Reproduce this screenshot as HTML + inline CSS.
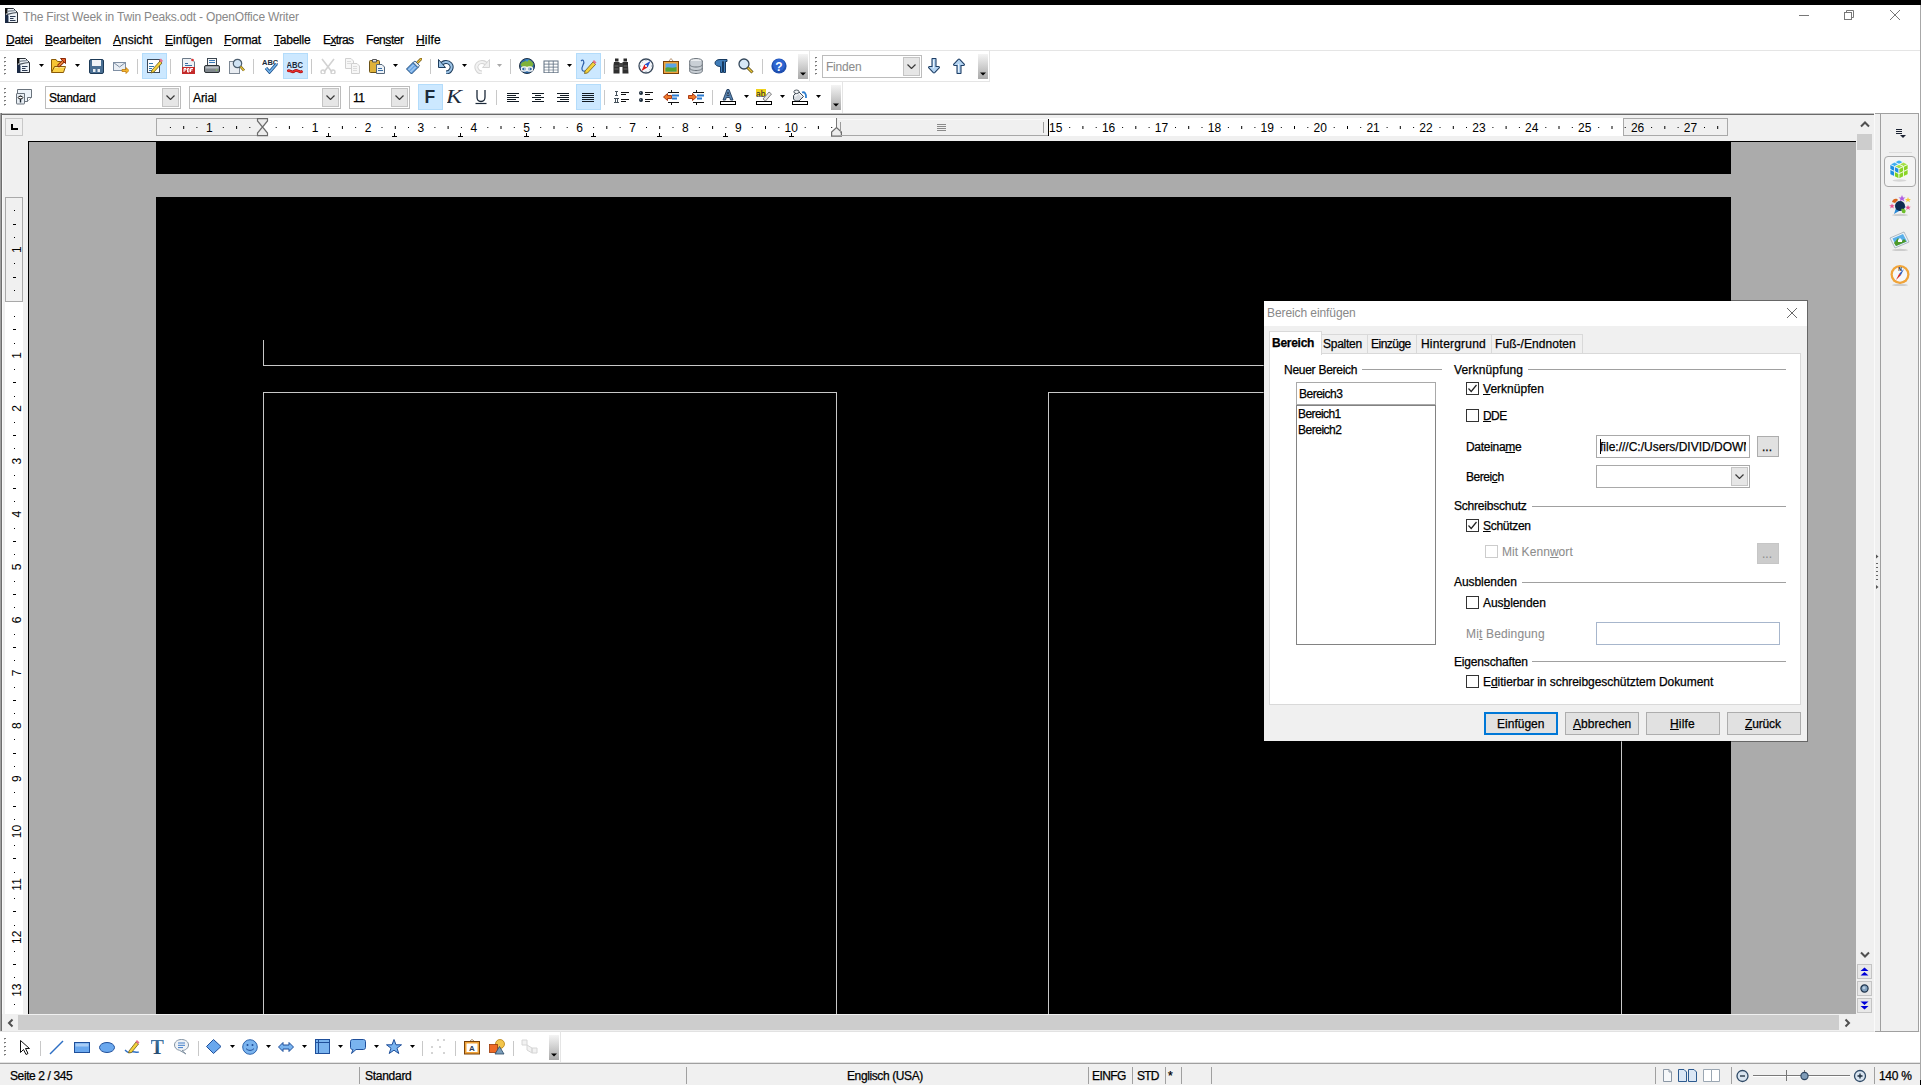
<!DOCTYPE html>
<html><head><meta charset="utf-8"><title>OpenOffice Writer</title>
<style>
*{box-sizing:border-box}
html,body{margin:0;padding:0}
body{width:1921px;height:1085px;position:relative;overflow:hidden;background:#fff;font-family:"Liberation Sans",sans-serif;font-size:12px;color:#000}
.a{position:absolute}
.t{position:absolute;white-space:nowrap;line-height:1;-webkit-text-stroke:0.25px currentColor}
.t u{text-decoration:underline;text-underline-offset:1px;text-decoration-thickness:1px}
</style></head><body>
<div class="a" style="left:0px;top:0px;width:1921px;height:5px;background:#000;"></div>
<svg class="a" style="left:5px;top:8px;" width="13" height="15" viewBox="0 0 13 15"><path d="M0.5 0.5H8.5L12.5 4.5V14.5H0.5Z" fill="#eef3f8" stroke="#2a2f36"/>
<path d="M0 0H2.5V5.5H0Z" fill="#111"/><path d="M0 7H3V15H0Z" fill="#1b2a45"/><path d="M3 7.5H4V14H3Z" fill="#8a98aa"/>
<path d="M2 4C4.5 2 7 3.5 11 2.5" fill="none" stroke="#7a8490" stroke-width="1.1"/><path d="M1.5 6.5C4 6.2 6 5 12 4.5" fill="none" stroke="#4a525c" stroke-width="1.1"/>
<path d="M5 8.5H10.5M5 10.5H8.5M5 12.5H10.5" stroke="#2c3a52" stroke-width="1.1"/></svg>
<div class="t" style="left:23px;top:11px;font-size:12px;color:#888;letter-spacing:-0.167px;-webkit-text-stroke:0.08px currentColor;-webkit-text-stroke:0px;">The First Week in Twin Peaks.odt - OpenOffice Writer</div>
<svg class="a" style="left:1799px;top:14px;" width="10" height="2" viewBox="0 0 10 2"><path d="M0 1.5H10" stroke="#777" stroke-width="1"/></svg>
<svg class="a" style="left:1844px;top:10px;" width="11" height="11" viewBox="0 0 11 11"><path d="M2.5 2V0.5H9.5V7.5H8" fill="none" stroke="#777" stroke-width="1"/><rect x="0.5" y="2.5" width="7" height="7" fill="none" stroke="#777" stroke-width="1"/></svg>
<svg class="a" style="left:1890px;top:10px;" width="10" height="10" viewBox="0 0 10 10"><path d="M0 0L10 10M10 0L0 10" stroke="#777" stroke-width="1"/></svg>
<div class="t" style="left:6px;top:34px;font-size:12px;letter-spacing:-0.274px;"><u>D</u>atei</div>
<div class="t" style="left:45px;top:34px;font-size:12px;letter-spacing:-0.208px;"><u>B</u>earbeiten</div>
<div class="t" style="left:113px;top:34px;font-size:12px;letter-spacing:-0.003px;"><u>A</u>nsicht</div>
<div class="t" style="left:165px;top:34px;font-size:12px;letter-spacing:0.014px;"><u>E</u>infügen</div>
<div class="t" style="left:224px;top:34px;font-size:12px;letter-spacing:-0.184px;"><u>F</u>ormat</div>
<div class="t" style="left:274px;top:34px;font-size:12px;letter-spacing:-0.226px;"><u>T</u>abelle</div>
<div class="t" style="left:323px;top:34px;font-size:12px;letter-spacing:-0.6px;">E<u>x</u>tras</div>
<div class="t" style="left:366px;top:34px;font-size:12px;letter-spacing:-0.448px;">Fen<u>s</u>ter</div>
<div class="t" style="left:416px;top:34px;font-size:12px;letter-spacing:0.167px;"><u>H</u>ilfe</div>
<div class="a" style="left:0px;top:50px;width:1921px;height:1px;background:#e5e5e5;"></div>
<svg class="a" style="left:4px;top:57px;" width="2" height="20" viewBox="0 0 2 20"><rect x="0" y="0" width="2" height="1" fill="#7a7a7a"/><rect x="0" y="1" width="1" height="1" fill="#c8c8c8"/><rect x="0" y="4" width="2" height="1" fill="#7a7a7a"/><rect x="0" y="5" width="1" height="1" fill="#c8c8c8"/><rect x="0" y="8" width="2" height="1" fill="#7a7a7a"/><rect x="0" y="9" width="1" height="1" fill="#c8c8c8"/><rect x="0" y="12" width="2" height="1" fill="#7a7a7a"/><rect x="0" y="13" width="1" height="1" fill="#c8c8c8"/><rect x="0" y="16" width="2" height="1" fill="#7a7a7a"/><rect x="0" y="17" width="1" height="1" fill="#c8c8c8"/></svg>
<svg class="a" style="left:17px;top:58px;" width="13" height="15" viewBox="0 0 13 15"><path d="M0.5 0.5H8.5L12.5 4.5V14.5H0.5Z" fill="#eef3f8" stroke="#2a2f36"/>
<path d="M0 0H2.5V5.5H0Z" fill="#111"/><path d="M0 7H3V15H0Z" fill="#1b2a45"/><path d="M3 7.5H4V14H3Z" fill="#8a98aa"/>
<path d="M2 4C4.5 2 7 3.5 11 2.5" fill="none" stroke="#7a8490" stroke-width="1.1"/><path d="M1.5 6.5C4 6.2 6 5 12 4.5" fill="none" stroke="#4a525c" stroke-width="1.1"/>
<path d="M5 8.5H10.5M5 10.5H8.5M5 12.5H10.5" stroke="#2c3a52" stroke-width="1.1"/></svg>
<svg class="a" style="left:39px;top:64px;" width="5" height="3" viewBox="0 0 5 3"><path d="M0 0H5L2.5 3Z" fill="#000"/></svg>
<svg class="a" style="left:51px;top:58px;" width="15" height="15" viewBox="0 0 15 15"><path d="M0.5 1.5H5L6.5 3.5H9.5V13.5H0.5Z" fill="#f7c533" stroke="#8a5a08"/>
<path d="M3.5 8.5H14.5L12.5 14.5H0.5Z" fill="#fbd248" stroke="#8a5a08"/><path d="M4 9.5H13.5" stroke="#fde68a"/>
<path d="M8 7.5L12 3.5" stroke="#8a2a08" stroke-width="3.2" stroke-linecap="round"/><path d="M8 7.5L12 3.5" stroke="#f08a3a" stroke-width="1.6" stroke-linecap="round"/>
<path d="M9.5 0.5H14.5V5.5Z" fill="#e8602a" stroke="#8a2a08" stroke-linejoin="round"/></svg>
<svg class="a" style="left:75px;top:64px;" width="5" height="3" viewBox="0 0 5 3"><path d="M0 0H5L2.5 3Z" fill="#000"/></svg>
<svg class="a" style="left:89px;top:58px;" width="16" height="16" viewBox="0 0 16 16"><rect x="0.5" y="1.5" width="14" height="14" rx="1.5" fill="#4a6f93" stroke="#1d3a57"/><rect x="3" y="2" width="9" height="6" fill="#f2f5f8"/>
<rect x="4" y="11" width="2.5" height="3" fill="#e6ecf2"/><rect x="8.5" y="11" width="2.5" height="3" fill="#e6ecf2"/></svg>
<svg class="a" style="left:113px;top:58px;" width="16" height="16" viewBox="0 0 16 16"><rect x="0.5" y="4.5" width="12" height="8" fill="#e9eef4" stroke="#7f8fa3"/><path d="M0.5 4.5L6.5 9L12.5 4.5" fill="none" stroke="#7f8fa3"/>
<path d="M9 11.5H13V9.5L16 12.5L13 15.5V13.5H9Z" fill="#f5b631" stroke="#c07a09" stroke-width="0.8"/></svg>
<div class="a" style="left:137px;top:59px;width:1px;height:15px;background:#c8c8c8;"></div>
<div class="a" style="left:142px;top:53px;width:25px;height:26px;background:#cce8ff;border:1px solid #b3dcfb;"></div>
<svg class="a" style="left:146px;top:58px;" width="17" height="16" viewBox="0 0 17 16"><rect x="1.5" y="1.5" width="12" height="13" fill="#fff" stroke="#3c4a5a"/><path d="M3 5.5H7M3 8.5H8M3 10.5H6M3 12.5H6" stroke="#3377aa"/>
<path d="M6 12L14 3L16 5L8 14L5 15Z" fill="#f4d03a" stroke="#6b5a1a" stroke-width="0.8"/><path d="M13 2L15 0.5L17 3L15 4.5Z" fill="#e8718a"/></svg>
<div class="a" style="left:170px;top:59px;width:1px;height:15px;background:#c8c8c8;"></div>
<svg class="a" style="left:181px;top:58px;" width="16" height="16" viewBox="0 0 16 16"><path d="M1.5 0.5H10L13.5 4V15.5H1.5Z" fill="#eef2f6" stroke="#6c7a88"/><path d="M4 5.5H7M4 7.5H11" stroke="#3a6ea5"/>
<rect x="1" y="9" width="13" height="7" fill="#c42a2a"/><path d="M3 10.5V14M3 10.5H5V12H3M6.5 10.5V14H8V10.5H6.5M9.5 10.5V14M9.5 10.5H12M9.5 12H11.5" stroke="#fff" stroke-width="1" fill="none"/>
<circle cx="11.5" cy="2" r="1.3" fill="#d33"/></svg>
<svg class="a" style="left:204px;top:58px;" width="16" height="16" viewBox="0 0 16 16"><rect x="3.5" y="0.5" width="9" height="7" fill="#f4f6f8" stroke="#3c4650"/><path d="M5 2.5H11M5 4.5H11" stroke="#3a78b5"/>
<rect x="0.5" y="7.5" width="15" height="7" rx="1.5" fill="#80878d" stroke="#2c3236"/><rect x="1.5" y="8.5" width="13" height="2" fill="#b8bec3"/><circle cx="12.5" cy="12" r="0.8" fill="#8fd14f"/></svg>
<svg class="a" style="left:229px;top:58px;" width="16" height="16" viewBox="0 0 16 16"><rect x="0.5" y="3.5" width="10" height="12" fill="#e9edf2" stroke="#7d8894"/>
<circle cx="8.5" cy="5.5" r="4.2" fill="#cfe2f3" stroke="#4b5d6e" stroke-width="1.2"/><path d="M11.5 8.5L15 12.5" stroke="#5c4c12" stroke-width="2.6"/><path d="M11.5 8.5L15 12.5" stroke="#e8c53a" stroke-width="1.4"/></svg>
<div class="a" style="left:253px;top:59px;width:1px;height:15px;background:#c8c8c8;"></div>
<svg class="a" style="left:262px;top:58px;" width="16" height="16" viewBox="0 0 16 16"><text x="0" y="7" font-family="Liberation Sans" font-weight="700" font-size="7.5" fill="#1b2a3a">ABC</text>
<path d="M4 10L7.5 14L14.5 6" fill="none" stroke="#1d4f8a" stroke-width="3.2"/><path d="M4 10L7.5 14L14.5 6" fill="none" stroke="#73b3ea" stroke-width="1.6"/></svg>
<div class="a" style="left:283px;top:53px;width:25px;height:26px;background:#cce8ff;border:1px solid #b3dcfb;"></div>
<svg class="a" style="left:287px;top:59px;" width="16" height="16" viewBox="0 0 16 16"><text x="-0.5" y="8.5" font-family="Liberation Sans" font-weight="700" font-size="9" fill="#1b2a3a" textLength="16.5" lengthAdjust="spacingAndGlyphs">ABC</text>
<path d="M0.5 12.5C2.5 9.5 4.5 15 7.5 12C10.5 9.5 12.5 15 15.5 12" fill="none" stroke="#a01010" stroke-width="2.6"/><path d="M0.5 12.5C2.5 9.5 4.5 15 7.5 12C10.5 9.5 12.5 15 15.5 12" fill="none" stroke="#ee3030" stroke-width="1.2"/></svg>
<div class="a" style="left:311px;top:59px;width:1px;height:15px;background:#c8c8c8;"></div>
<svg class="a" style="left:320px;top:58px;" width="16" height="16" viewBox="0 0 16 16"><path d="M2 1L12 14M14 1L4 14" stroke="#d2d2d2" stroke-width="1.6"/><circle cx="3" cy="14" r="2" fill="none" stroke="#d2d2d2" stroke-width="1.4"/><circle cx="13" cy="14" r="2" fill="none" stroke="#d2d2d2" stroke-width="1.4"/></svg>
<svg class="a" style="left:345px;top:58px;" width="16" height="16" viewBox="0 0 16 16"><path d="M0.5 0.5H6L8.5 3V10.5H0.5Z" fill="#f7f7f7" stroke="#d0d0d0"/><path d="M6.5 5.5H12L14.5 8V15.5H6.5Z" fill="#f7f7f7" stroke="#d0d0d0"/><path d="M2 3.5H6M2 5.5H6M8 8.5H12M8 10.5H12M8 12.5H12" stroke="#dcdcdc"/></svg>
<svg class="a" style="left:369px;top:58px;" width="16" height="16" viewBox="0 0 16 16"><rect x="0.5" y="2.5" width="10" height="12" rx="1" fill="#dfb23a" stroke="#6b5217"/><path d="M3.5 1.5H7.5V4H3.5Z" fill="#e6e9ec" stroke="#555"/>
<path d="M7.5 6.5H13L15.5 9V15.5H7.5Z" fill="#eef3f8" stroke="#55677a"/><path d="M9 10.5H13M9 12.5H14" stroke="#3a6ea5"/></svg>
<svg class="a" style="left:393px;top:64px;" width="5" height="3" viewBox="0 0 5 3"><path d="M0 0H5L2.5 3Z" fill="#000"/></svg>
<svg class="a" style="left:406px;top:58px;" width="16" height="16" viewBox="0 0 16 16"><path d="M10.5 5.5L15 1" stroke="#6d5310" stroke-width="2.6" stroke-linecap="round"/><path d="M10.5 5.5L15 1" stroke="#e8c040" stroke-width="1.3" stroke-linecap="round"/>
<path d="M0.5 11L7 4.5L12 9.5L5.5 16Z" fill="#6ea8e6" stroke="#1f4a7a"/><path d="M7 4.5L9 3L13.5 7.5L12 9.5Z" fill="#dfe8f0" stroke="#1f4a7a" stroke-width="0.8"/>
<path d="M2.5 12L7.5 7M4.5 14L9.5 9" stroke="#c6def5" stroke-width="1"/></svg>
<div class="a" style="left:430px;top:59px;width:1px;height:15px;background:#c8c8c8;"></div>
<svg class="a" style="left:438px;top:58px;" width="16" height="16" viewBox="0 0 16 16"><path d="M3.5 6.5C5 3.5 10 3 12.5 6C15 9 13 14.5 8 14.5" fill="none" stroke="#1f3d5c" stroke-width="4"/><path d="M3.5 6.5C5 3.5 10 3 12.5 6C15 9 13 14.5 8 14.5" fill="none" stroke="#9cc3e6" stroke-width="2"/>
<path d="M0.5 1.5V9.5H7.5Z" fill="#9cc3e6" stroke="#1f3d5c"/></svg>
<svg class="a" style="left:462px;top:64px;" width="5" height="3" viewBox="0 0 5 3"><path d="M0 0H5L2.5 3Z" fill="#000"/></svg>
<svg class="a" style="left:474px;top:58px;" width="16" height="16" viewBox="0 0 16 16"><path d="M12.5 6.5C11 3.5 6 3 3.5 6C1 9 3 14.5 8 14.5" fill="none" stroke="#d4d4d4" stroke-width="4"/><path d="M12.5 6.5C11 3.5 6 3 3.5 6C1 9 3 14.5 8 14.5" fill="none" stroke="#f2f2f2" stroke-width="2"/>
<path d="M15.5 1.5V9.5H8.5Z" fill="#f0f0f0" stroke="#d4d4d4"/></svg>
<svg class="a" style="left:497px;top:64px;" width="5" height="3" viewBox="0 0 5 3"><path d="M0 0H5L2.5 3Z" fill="#a8a8a8"/></svg>
<div class="a" style="left:510px;top:59px;width:1px;height:15px;background:#c8c8c8;"></div>
<svg class="a" style="left:519px;top:58px;" width="16" height="16" viewBox="0 0 16 16"><circle cx="8" cy="8" r="7.5" fill="#2e6aa8" stroke="#1e3044"/><path d="M1.5 7C3 3 5 4.5 7 2.5C9 1 12 2 14.5 6L13 9H3Z" fill="#7fb23a"/><path d="M6 1.5L8 4L10 1.5" fill="#3d8fd8"/>
<rect x="2.5" y="9" width="5.5" height="4" rx="2" fill="none" stroke="#f4f4f4" stroke-width="1.4"/><rect x="8" y="9" width="5.5" height="4" rx="2" fill="none" stroke="#f4f4f4" stroke-width="1.4"/><path d="M5 11H11" stroke="#f4f4f4" stroke-width="1.2"/></svg>
<svg class="a" style="left:543px;top:60px;" width="16" height="16" viewBox="0 0 16 16"><rect x="0.5" y="0.5" width="15" height="12.5" fill="#5f6f80"/><path d="M1 1H15V13H1Z" fill="none"/>
<g fill="#fff"><rect x="1.5" y="1.5" width="4" height="2.2"/><rect x="6.3" y="1.5" width="3.5" height="2.2"/><rect x="10.6" y="1.5" width="4" height="2.2"/>
<rect x="1.5" y="4.5" width="4" height="2.2"/><rect x="6.3" y="4.5" width="3.5" height="2.2"/><rect x="10.6" y="4.5" width="4" height="2.2"/>
<rect x="1.5" y="7.5" width="4" height="2.2"/><rect x="6.3" y="7.5" width="3.5" height="2.2"/><rect x="10.6" y="7.5" width="4" height="2.2"/>
<rect x="1.5" y="10.3" width="4" height="2"/><rect x="6.3" y="10.3" width="3.5" height="2"/><rect x="10.6" y="10.3" width="4" height="2"/></g></svg>
<svg class="a" style="left:567px;top:64px;" width="5" height="3" viewBox="0 0 5 3"><path d="M0 0H5L2.5 3Z" fill="#000"/></svg>
<div class="a" style="left:576px;top:53px;width:25px;height:26px;background:#cce8ff;border:1px solid #b3dcfb;"></div>
<svg class="a" style="left:580px;top:58px;" width="17" height="16" viewBox="0 0 17 16"><path d="M1 3C3 1 5 3 3 7C1 11 2 14 5 13" fill="none" stroke="#2e5fa8" stroke-width="1.2"/>
<path d="M5 13L13 4L15.5 6.5L7.5 15L4.5 15.5Z" fill="#f4d03a" stroke="#6b5a1a" stroke-width="0.8"/><path d="M12.5 3.5L14 2L16.5 4.5L15 6Z" fill="#e8718a"/></svg>
<div class="a" style="left:604px;top:59px;width:1px;height:15px;background:#c8c8c8;"></div>
<svg class="a" style="left:613px;top:58px;" width="16" height="16" viewBox="0 0 16 16"><rect x="2" y="0.5" width="3.5" height="3" fill="#2a2a2a"/><rect x="10.5" y="0.5" width="3.5" height="3" fill="#2a2a2a"/>
<path d="M1 4H6.5V15.5H0.5V7Z" fill="#2f2f2f"/><path d="M9.5 4H15V7L15.5 15.5H9.5Z" fill="#2f2f2f"/><rect x="6" y="5" width="4" height="4" fill="#444"/>
<path d="M1.5 8H5.5M1.5 11H5.5M10.5 8H14.5M10.5 11H14.5" stroke="#777" stroke-width="0.8"/></svg>
<svg class="a" style="left:638px;top:58px;" width="16" height="16" viewBox="0 0 16 16"><circle cx="8" cy="8" r="7" fill="#f4f6f9" stroke="#3b4a5c" stroke-width="1.3"/><path d="M8 1.5V3M8 13V14.5M1.5 8H3M13 8H14.5M3.5 3.5L4.5 4.5M12.5 12.5L11.5 11.5M12.5 3.5L11.5 4.5M3.5 12.5L4.5 11.5" stroke="#8a96a4" stroke-width="0.8"/>
<path d="M12.5 3L9.6 9.4L6.6 6.4Z" fill="#2450c8"/><path d="M3.5 13L6.4 6.6L9.4 9.6Z" fill="#e01818"/><circle cx="8" cy="8" r="1" fill="#fff"/></svg>
<svg class="a" style="left:663px;top:58px;" width="16" height="16" viewBox="0 0 16 16"><path d="M6 3L8 0.5L10 3" fill="none" stroke="#a67c52" stroke-width="0.8"/><rect x="0.5" y="3.5" width="15" height="12" fill="#f0a43a" stroke="#7a4208"/>
<rect x="2.5" y="5.5" width="11" height="8" fill="#5aa5e6"/><path d="M2.5 10C5 8 8 11 13.5 9V13.5H2.5Z" fill="#53a331"/></svg>
<svg class="a" style="left:689px;top:58px;" width="14" height="16" viewBox="0 0 14 16"><ellipse cx="7" cy="3" rx="6.3" ry="2.5" fill="#e9ecef" stroke="#6e767e"/><path d="M0.7 3V13C0.7 14.5 3.5 15.5 7 15.5C10.5 15.5 13.3 14.5 13.3 13V3" fill="#c9cfd5" stroke="#6e767e"/>
<path d="M0.7 6.5C0.7 8 3.5 9 7 9C10.5 9 13.3 8 13.3 6.5M0.7 10C0.7 11.5 3.5 12.5 7 12.5C10.5 12.5 13.3 11.5 13.3 10" fill="none" stroke="#6e767e"/></svg>
<svg class="a" style="left:714px;top:59px;" width="14" height="15" viewBox="0 0 14 15"><path d="M6 0.5H13V2.5H11.5V13.5H9.5V2.5H8.5V13.5H6.5V7.5C3 7.5 1 6 1 4C1 2 3 0.5 6 0.5Z" fill="#3f7cb8" stroke="#173a60"/></svg>
<svg class="a" style="left:738px;top:58px;" width="16" height="16" viewBox="0 0 16 16"><circle cx="6" cy="6" r="5" fill="#d6e8f7" stroke="#33475a" stroke-width="1.3"/><path d="M9.5 9.5L14.5 14.5" stroke="#5c4c12" stroke-width="3"/><path d="M9.8 9.8L14.2 14.2" stroke="#e8c53a" stroke-width="1.5"/></svg>
<div class="a" style="left:762px;top:59px;width:1px;height:15px;background:#c8c8c8;"></div>
<svg class="a" style="left:771px;top:58px;" width="16" height="16" viewBox="0 0 16 16"><circle cx="8" cy="8" r="7.6" fill="#1f4fb0"/><circle cx="8" cy="7" r="6" fill="#2d65d1"/><text x="8" y="12.5" text-anchor="middle" font-family="Liberation Sans" font-weight="700" font-size="12" fill="#fff">?</text></svg>
<div class="a" style="left:798px;top:54px;width:10px;height:25px;background:linear-gradient(#f4f4f4,#a9a9a9);"></div>
<svg class="a" style="left:800px;top:72px;" width="6" height="4" viewBox="0 0 6 4"><path d="M0 0.5H6L3 3.5Z" fill="#000"/></svg>
<div class="a" style="left:809px;top:51px;width:1px;height:30px;background:#e5e5e5;"></div>
<svg class="a" style="left:815px;top:57px;" width="2" height="20" viewBox="0 0 2 20"><rect x="0" y="0" width="2" height="1" fill="#7a7a7a"/><rect x="0" y="1" width="1" height="1" fill="#c8c8c8"/><rect x="0" y="4" width="2" height="1" fill="#7a7a7a"/><rect x="0" y="5" width="1" height="1" fill="#c8c8c8"/><rect x="0" y="8" width="2" height="1" fill="#7a7a7a"/><rect x="0" y="9" width="1" height="1" fill="#c8c8c8"/><rect x="0" y="12" width="2" height="1" fill="#7a7a7a"/><rect x="0" y="13" width="1" height="1" fill="#c8c8c8"/><rect x="0" y="16" width="2" height="1" fill="#7a7a7a"/><rect x="0" y="17" width="1" height="1" fill="#c8c8c8"/></svg>
<div class="a" style="left:822px;top:55px;width:100px;height:23px;background:#fff;border:1px solid #bcbcbc;"></div>
<div class="a" style="left:903px;top:57px;width:17px;height:19px;background:#e6e6e6;border:1px solid #c4c4c4;"></div>
<svg class="a" style="left:907px;top:64px;" width="9" height="5" viewBox="0 0 9 5"><path d="M0.5 0.5L4.5 4.5L8.5 0.5" fill="none" stroke="#3a3a3a" stroke-width="1.2"/></svg>
<div class="t" style="left:826px;top:61px;font-size:12px;color:#8d8d8d;letter-spacing:-0.224px;-webkit-text-stroke:0.08px currentColor;">Finden</div>
<svg class="a" style="left:928px;top:58px;" width="12" height="16" viewBox="0 0 12 16"><path d="M4 1C4 0.7 4.3 0.5 4.5 0.5H7.5C7.8 0.5 8 0.7 8 1V8.5H10.5C11.3 8.5 11.7 9.3 11.2 9.9L6.7 14.7C6.3 15.1 5.7 15.1 5.3 14.7L0.8 9.9C0.3 9.3 0.7 8.5 1.5 8.5H4Z" fill="#b4d4f2" stroke="#1f3f66" stroke-width="1.1"/><path d="M5.5 2V10" stroke="#e8f2fb"/></svg>
<svg class="a" style="left:953px;top:58px;" width="12" height="16" viewBox="0 0 12 16"><path d="M4 15C4 15.3 4.3 15.5 4.5 15.5H7.5C7.8 15.5 8 15.3 8 15V7.5H10.5C11.3 7.5 11.7 6.7 11.2 6.1L6.7 1.3C6.3 0.9 5.7 0.9 5.3 1.3L0.8 6.1C0.3 6.7 0.7 7.5 1.5 7.5H4Z" fill="#b4d4f2" stroke="#1f3f66" stroke-width="1.1"/><path d="M5.5 6V14" stroke="#e8f2fb"/></svg>
<div class="a" style="left:978px;top:54px;width:10px;height:25px;background:linear-gradient(#f4f4f4,#a9a9a9);"></div>
<svg class="a" style="left:980px;top:72px;" width="6" height="4" viewBox="0 0 6 4"><path d="M0 0.5H6L3 3.5Z" fill="#000"/></svg>
<div class="a" style="left:989px;top:51px;width:1px;height:30px;background:#e5e5e5;"></div>
<div class="a" style="left:0px;top:81px;width:990px;height:1px;background:#e5e5e5;"></div>
<svg class="a" style="left:4px;top:88px;" width="2" height="20" viewBox="0 0 2 20"><rect x="0" y="0" width="2" height="1" fill="#7a7a7a"/><rect x="0" y="1" width="1" height="1" fill="#c8c8c8"/><rect x="0" y="4" width="2" height="1" fill="#7a7a7a"/><rect x="0" y="5" width="1" height="1" fill="#c8c8c8"/><rect x="0" y="8" width="2" height="1" fill="#7a7a7a"/><rect x="0" y="9" width="1" height="1" fill="#c8c8c8"/><rect x="0" y="12" width="2" height="1" fill="#7a7a7a"/><rect x="0" y="13" width="1" height="1" fill="#c8c8c8"/><rect x="0" y="16" width="2" height="1" fill="#7a7a7a"/><rect x="0" y="17" width="1" height="1" fill="#c8c8c8"/></svg>
<svg class="a" style="left:16px;top:89px;" width="17" height="16" viewBox="0 0 17 16"><path d="M1.5 0.5H15.5V8.5L11.5 12.5H8.5V4.5H1.5Z" fill="#eef4fa" stroke="#6a737c"/><path d="M15.5 8.5H11.5V12.5" fill="#fff" stroke="#6a737c"/>
<rect x="0.5" y="4.5" width="8" height="10.5" rx="0.5" fill="#e8eef4" stroke="#6a737c"/><path d="M4.5 6.5V13.5" stroke="#1a2530" stroke-width="1.4"/><ellipse cx="4.5" cy="8.6" rx="2.4" ry="1.3" fill="#fff" stroke="#222" stroke-width="1"/></svg>
<div class="a" style="left:45px;top:86px;width:136px;height:23px;background:#fff;border:1px solid #bcbcbc;"></div>
<div class="a" style="left:162px;top:88px;width:17px;height:19px;background:#e6e6e6;border:1px solid #c4c4c4;"></div>
<svg class="a" style="left:166px;top:95px;" width="9" height="5" viewBox="0 0 9 5"><path d="M0.5 0.5L4.5 4.5L8.5 0.5" fill="none" stroke="#3a3a3a" stroke-width="1.2"/></svg>
<div class="t" style="left:49px;top:92px;font-size:12px;letter-spacing:-0.276px;">Standard</div>
<div class="a" style="left:189px;top:86px;width:152px;height:23px;background:#fff;border:1px solid #bcbcbc;"></div>
<div class="a" style="left:322px;top:88px;width:17px;height:19px;background:#e6e6e6;border:1px solid #c4c4c4;"></div>
<svg class="a" style="left:326px;top:95px;" width="9" height="5" viewBox="0 0 9 5"><path d="M0.5 0.5L4.5 4.5L8.5 0.5" fill="none" stroke="#3a3a3a" stroke-width="1.2"/></svg>
<div class="t" style="left:193px;top:92px;font-size:12px;letter-spacing:-0.085px;">Arial</div>
<div class="a" style="left:349px;top:86px;width:61px;height:23px;background:#fff;border:1px solid #bcbcbc;"></div>
<div class="a" style="left:391px;top:88px;width:17px;height:19px;background:#e6e6e6;border:1px solid #c4c4c4;"></div>
<svg class="a" style="left:395px;top:95px;" width="9" height="5" viewBox="0 0 9 5"><path d="M0.5 0.5L4.5 4.5L8.5 0.5" fill="none" stroke="#3a3a3a" stroke-width="1.2"/></svg>
<div class="t" style="left:353px;top:92px;font-size:12px;letter-spacing:-0.6px;">11</div>
<div class="a" style="left:418px;top:84px;width:25px;height:26px;background:#cce8ff;border:1px solid #b3dcfb;"></div>
<svg class="a" style="left:425px;top:89px;" width="12" height="16" viewBox="0 0 12 16"><text x="-0.5" y="14" font-family="Liberation Sans" font-weight="700" font-size="17.5" fill="#1c2a3a">F</text></svg>
<svg class="a" style="left:447px;top:89px;" width="17" height="16" viewBox="0 0 17 16"><text x="-1" y="14" font-family="Liberation Serif" font-style="italic" font-weight="400" font-size="19.5" fill="#1c2a3a" textLength="16" lengthAdjust="spacingAndGlyphs">K</text></svg>
<svg class="a" style="left:475px;top:89px;" width="12" height="16" viewBox="0 0 12 16"><path d="M2 1V8C2 11.5 3.5 12.5 6 12.5C8.5 12.5 10 11.5 10 8V1" fill="none" stroke="#1c2a3a" stroke-width="1.3"/><path d="M0.5 14.5H11.5" stroke="#1c2a3a" stroke-width="1.2"/></svg>
<div class="a" style="left:496px;top:90px;width:1px;height:15px;background:#c8c8c8;"></div>
<svg class="a" style="left:507px;top:93px;" width="12" height="9" viewBox="0 0 12 9"><rect x="0" y="0" width="12" height="1" fill="#111a22"/><rect x="0" y="2" width="9" height="1" fill="#111a22"/><rect x="0" y="4" width="12" height="1" fill="#111a22"/><rect x="0" y="6" width="9" height="1" fill="#111a22"/><rect x="0" y="8" width="12" height="1" fill="#111a22"/></svg>
<svg class="a" style="left:532px;top:93px;" width="12" height="9" viewBox="0 0 12 9"><rect x="0" y="0" width="12" height="1" fill="#111a22"/><rect x="3" y="2" width="6" height="1" fill="#111a22"/><rect x="0" y="4" width="12" height="1" fill="#111a22"/><rect x="3" y="6" width="6" height="1" fill="#111a22"/><rect x="0" y="8" width="12" height="1" fill="#111a22"/></svg>
<svg class="a" style="left:557px;top:93px;" width="12" height="9" viewBox="0 0 12 9"><rect x="0" y="0" width="12" height="1" fill="#111a22"/><rect x="3" y="2" width="9" height="1" fill="#111a22"/><rect x="0" y="4" width="12" height="1" fill="#111a22"/><rect x="3" y="6" width="9" height="1" fill="#111a22"/><rect x="0" y="8" width="12" height="1" fill="#111a22"/></svg>
<div class="a" style="left:576px;top:84px;width:25px;height:26px;background:#cce8ff;border:1px solid #b3dcfb;"></div>
<svg class="a" style="left:582px;top:93px;" width="12" height="9" viewBox="0 0 12 9"><rect x="0" y="0" width="12" height="1" fill="#111a22"/><rect x="0" y="2" width="12" height="1" fill="#111a22"/><rect x="0" y="4" width="12" height="1" fill="#111a22"/><rect x="0" y="6" width="12" height="1" fill="#111a22"/><rect x="0" y="8" width="12" height="1" fill="#111a22"/></svg>
<div class="a" style="left:604px;top:90px;width:1px;height:15px;background:#c8c8c8;"></div>
<svg class="a" style="left:613px;top:89px;" width="17" height="16" viewBox="0 0 17 16"><path d="M2 2.5H5M3.5 2.5V6.5M2 6.5H5M1 9.5H6M2.5 9.5V13.5M4.5 9.5V13.5M1 13.5H6" stroke="#46525c" stroke-width="1" fill="none"/>
<path d="M8 3.5H16M8 5.5H13M8 10.5H16M8 12.5H13" stroke="#111" stroke-width="1.1"/></svg>
<svg class="a" style="left:638px;top:89px;" width="16" height="16" viewBox="0 0 16 16"><circle cx="3" cy="4" r="2" fill="#1d2c3a"/><circle cx="3" cy="11" r="2" fill="#1d2c3a"/><circle cx="2.6" cy="3.6" r="0.6" fill="#8aa0b8"/><circle cx="2.6" cy="10.6" r="0.6" fill="#8aa0b8"/>
<path d="M7 3.5H15M7 5.5H12M7 10.5H15M7 12.5H12" stroke="#111" stroke-width="1.1"/></svg>
<svg class="a" style="left:663px;top:89px;" width="17" height="17" viewBox="0 0 17 17"><path d="M5 3.5H16M5 13.5H16" stroke="#111"/><path d="M8.5 1V4M8.5 13V16" stroke="#111"/>
<path d="M9 6.5H16M9 9.5H14" stroke="#2a7bd0" stroke-width="2"/>
<path d="M0.5 8L4.5 4.5V6.5H8.5V9.5H4.5V11.5Z" fill="#f07a2a" stroke="#a02c08" stroke-width="0.9" stroke-linejoin="round"/></svg>
<svg class="a" style="left:688px;top:89px;" width="17" height="17" viewBox="0 0 17 17"><path d="M5 3.5H16M5 13.5H16" stroke="#111"/><path d="M8.5 1V4M8.5 13V16" stroke="#111"/>
<path d="M9 6.5H16M9 9.5H14" stroke="#2a7bd0" stroke-width="2"/>
<path d="M8.5 8L4.5 4.5V6.5H0.5V9.5H4.5V11.5Z" fill="#f07a2a" stroke="#a02c08" stroke-width="0.9" stroke-linejoin="round"/></svg>
<div class="a" style="left:712px;top:90px;width:1px;height:15px;background:#c8c8c8;"></div>
<svg class="a" style="left:720px;top:89px;" width="16" height="16" viewBox="0 0 16 16"><path d="M3 11L7 0.5H9L13 11H10.5L9.7 8.5H6.3L5.5 11Z M6.9 6.5H9.1L8 3Z" fill="#5a86b3" stroke="#1f3a5a" stroke-width="0.9" fill-rule="evenodd"/><rect x="0.5" y="12.5" width="15" height="3" fill="#fff" stroke="#000"/></svg>
<svg class="a" style="left:744px;top:95px;" width="5" height="3" viewBox="0 0 5 3"><path d="M0 0H5L2.5 3Z" fill="#000"/></svg>
<svg class="a" style="left:756px;top:89px;" width="16" height="16" viewBox="0 0 16 16"><rect x="0" y="0" width="10" height="7" fill="#f0d21a"/><text x="0" y="8" font-family="Liberation Sans" font-size="8.5" fill="#1b2530">ab</text>
<path d="M7 10L13 3L15.5 5L9.5 12Z" fill="#e6e6e6" stroke="#666" stroke-width="0.8"/><rect x="0.5" y="12.5" width="15" height="3" fill="#fff" stroke="#000"/></svg>
<svg class="a" style="left:780px;top:95px;" width="5" height="3" viewBox="0 0 5 3"><path d="M0 0H5L2.5 3Z" fill="#000"/></svg>
<svg class="a" style="left:792px;top:89px;" width="16" height="16" viewBox="0 0 16 16"><path d="M1.5 6.5L6 2L11.5 7.5L7 12H3.5L1.5 10Z" fill="#d7dbe0" stroke="#3c4650" stroke-linejoin="round"/><path d="M3 7.5L6.5 4L10 7.5" fill="none" stroke="#f6f8fa" stroke-width="1.2"/>
<ellipse cx="4.5" cy="2.8" rx="2.6" ry="1.8" fill="#f0f2f4" stroke="#3c4650" stroke-width="0.9"/><path d="M10 3.5C12.5 2.5 14.5 4.5 14 9" fill="none" stroke="#2f7fcf" stroke-width="1.8"/>
<rect x="0.5" y="12.5" width="15" height="3" fill="#fff" stroke="#000"/></svg>
<svg class="a" style="left:816px;top:95px;" width="5" height="3" viewBox="0 0 5 3"><path d="M0 0H5L2.5 3Z" fill="#000"/></svg>
<div class="a" style="left:831px;top:85px;width:10px;height:25px;background:linear-gradient(#f4f4f4,#a9a9a9);"></div>
<svg class="a" style="left:833px;top:103px;" width="6" height="4" viewBox="0 0 6 4"><path d="M0 0.5H6L3 3.5Z" fill="#000"/></svg>
<div class="a" style="left:842px;top:82px;width:1px;height:31px;background:#e5e5e5;"></div>
<div class="a" style="left:0px;top:113px;width:1874px;height:1px;background:#c4c4c4;"></div>
<div class="a" style="left:0px;top:114px;width:1874px;height:1px;background:#6a6a6a;"></div>
<div class="a" style="left:0px;top:115px;width:1874px;height:26px;background:#f0f0f0;"></div>
<div class="a" style="left:0px;top:113px;width:1px;height:918px;background:#a0a0a0;"></div>
<div class="a" style="left:1px;top:113px;width:1px;height:918px;background:#6e6e6e;"></div>
<div class="a" style="left:5px;top:118px;width:18px;height:18px;background:#f0f0f0;border:1px solid #c8c8c8;"></div>
<svg class="a" style="left:11px;top:124px;" width="7" height="6" viewBox="0 0 7 6"><path d="M0 0H2V4H7V6H0Z" fill="#000"/></svg>
<div class="a" style="left:156px;top:118px;width:1572px;height:18px;background:#fff;"></div>
<div class="a" style="left:156px;top:118px;width:107px;height:18px;background:#f0f0f0;border:1px solid #a9a9a9;border-right:none;"></div>
<div class="a" style="left:836px;top:118px;width:212px;height:18px;background:#f0f0f0;"></div>
<div class="a" style="left:1623px;top:118px;width:105px;height:18px;background:#f0f0f0;border:1px solid #a9a9a9;"></div>
<svg class="a" style="left:156px;top:118px;" width="1572" height="20" viewBox="0 0 1572 20"><rect x="13.9" y="9" width="1" height="1" fill="#000"/><rect x="27.2" y="8" width="1" height="3" fill="#000"/><rect x="40.4" y="9" width="1" height="1" fill="#000"/><text x="53.3" y="14" text-anchor="middle" font-family="Liberation Sans" font-size="12" fill="#000">1</text><rect x="66.8" y="9" width="1" height="1" fill="#000"/><rect x="80.1" y="8" width="1" height="3" fill="#000"/><rect x="93.3" y="9" width="1" height="1" fill="#000"/><rect x="119.7" y="9" width="1" height="1" fill="#000"/><rect x="132.9" y="8" width="1" height="3" fill="#000"/><rect x="146.2" y="9" width="1" height="1" fill="#000"/><text x="159.1" y="14" text-anchor="middle" font-family="Liberation Sans" font-size="12" fill="#000">1</text><rect x="172.6" y="9" width="1" height="1" fill="#000"/><rect x="185.9" y="8" width="1" height="3" fill="#000"/><rect x="199.1" y="9" width="1" height="1" fill="#000"/><text x="212.0" y="14" text-anchor="middle" font-family="Liberation Sans" font-size="12" fill="#000">2</text><rect x="225.5" y="9" width="1" height="1" fill="#000"/><rect x="238.8" y="8" width="1" height="3" fill="#000"/><rect x="252.0" y="9" width="1" height="1" fill="#000"/><text x="264.9" y="14" text-anchor="middle" font-family="Liberation Sans" font-size="12" fill="#000">3</text><rect x="278.4" y="9" width="1" height="1" fill="#000"/><rect x="291.6" y="8" width="1" height="3" fill="#000"/><rect x="304.9" y="9" width="1" height="1" fill="#000"/><text x="317.8" y="14" text-anchor="middle" font-family="Liberation Sans" font-size="12" fill="#000">4</text><rect x="331.3" y="9" width="1" height="1" fill="#000"/><rect x="344.5" y="8" width="1" height="3" fill="#000"/><rect x="357.8" y="9" width="1" height="1" fill="#000"/><text x="370.7" y="14" text-anchor="middle" font-family="Liberation Sans" font-size="12" fill="#000">5</text><rect x="384.2" y="9" width="1" height="1" fill="#000"/><rect x="397.5" y="8" width="1" height="3" fill="#000"/><rect x="410.7" y="9" width="1" height="1" fill="#000"/><text x="423.6" y="14" text-anchor="middle" font-family="Liberation Sans" font-size="12" fill="#000">6</text><rect x="437.1" y="9" width="1" height="1" fill="#000"/><rect x="450.3" y="8" width="1" height="3" fill="#000"/><rect x="463.6" y="9" width="1" height="1" fill="#000"/><text x="476.5" y="14" text-anchor="middle" font-family="Liberation Sans" font-size="12" fill="#000">7</text><rect x="490.0" y="9" width="1" height="1" fill="#000"/><rect x="503.2" y="8" width="1" height="3" fill="#000"/><rect x="516.5" y="9" width="1" height="1" fill="#000"/><text x="529.4" y="14" text-anchor="middle" font-family="Liberation Sans" font-size="12" fill="#000">8</text><rect x="542.9" y="9" width="1" height="1" fill="#000"/><rect x="556.1" y="8" width="1" height="3" fill="#000"/><rect x="569.4" y="9" width="1" height="1" fill="#000"/><text x="582.3" y="14" text-anchor="middle" font-family="Liberation Sans" font-size="12" fill="#000">9</text><rect x="595.8" y="9" width="1" height="1" fill="#000"/><rect x="609.0" y="8" width="1" height="3" fill="#000"/><rect x="622.3" y="9" width="1" height="1" fill="#000"/><text x="635.2" y="14" text-anchor="middle" font-family="Liberation Sans" font-size="12" fill="#000">10</text><rect x="648.7" y="9" width="1" height="1" fill="#000"/><rect x="661.9" y="8" width="1" height="3" fill="#000"/><rect x="675.2" y="9" width="1" height="1" fill="#000"/><text x="899.7" y="14" text-anchor="middle" font-family="Liberation Sans" font-size="12" fill="#000">15</text><rect x="913.2" y="9" width="1" height="1" fill="#000"/><rect x="926.4" y="8" width="1" height="3" fill="#000"/><rect x="939.7" y="9" width="1" height="1" fill="#000"/><text x="952.6" y="14" text-anchor="middle" font-family="Liberation Sans" font-size="12" fill="#000">16</text><rect x="966.1" y="9" width="1" height="1" fill="#000"/><rect x="979.3" y="8" width="1" height="3" fill="#000"/><rect x="992.6" y="9" width="1" height="1" fill="#000"/><text x="1005.5" y="14" text-anchor="middle" font-family="Liberation Sans" font-size="12" fill="#000">17</text><rect x="1019.0" y="9" width="1" height="1" fill="#000"/><rect x="1032.2" y="8" width="1" height="3" fill="#000"/><rect x="1045.5" y="9" width="1" height="1" fill="#000"/><text x="1058.4" y="14" text-anchor="middle" font-family="Liberation Sans" font-size="12" fill="#000">18</text><rect x="1071.9" y="9" width="1" height="1" fill="#000"/><rect x="1085.2" y="8" width="1" height="3" fill="#000"/><rect x="1098.4" y="9" width="1" height="1" fill="#000"/><text x="1111.3" y="14" text-anchor="middle" font-family="Liberation Sans" font-size="12" fill="#000">19</text><rect x="1124.8" y="9" width="1" height="1" fill="#000"/><rect x="1138.0" y="8" width="1" height="3" fill="#000"/><rect x="1151.3" y="9" width="1" height="1" fill="#000"/><text x="1164.2" y="14" text-anchor="middle" font-family="Liberation Sans" font-size="12" fill="#000">20</text><rect x="1177.7" y="9" width="1" height="1" fill="#000"/><rect x="1191.0" y="8" width="1" height="3" fill="#000"/><rect x="1204.2" y="9" width="1" height="1" fill="#000"/><text x="1217.1" y="14" text-anchor="middle" font-family="Liberation Sans" font-size="12" fill="#000">21</text><rect x="1230.6" y="9" width="1" height="1" fill="#000"/><rect x="1243.8" y="8" width="1" height="3" fill="#000"/><rect x="1257.1" y="9" width="1" height="1" fill="#000"/><text x="1270.0" y="14" text-anchor="middle" font-family="Liberation Sans" font-size="12" fill="#000">22</text><rect x="1283.5" y="9" width="1" height="1" fill="#000"/><rect x="1296.8" y="8" width="1" height="3" fill="#000"/><rect x="1310.0" y="9" width="1" height="1" fill="#000"/><text x="1322.9" y="14" text-anchor="middle" font-family="Liberation Sans" font-size="12" fill="#000">23</text><rect x="1336.4" y="9" width="1" height="1" fill="#000"/><rect x="1349.6" y="8" width="1" height="3" fill="#000"/><rect x="1362.9" y="9" width="1" height="1" fill="#000"/><text x="1375.8" y="14" text-anchor="middle" font-family="Liberation Sans" font-size="12" fill="#000">24</text><rect x="1389.3" y="9" width="1" height="1" fill="#000"/><rect x="1402.5" y="8" width="1" height="3" fill="#000"/><rect x="1415.8" y="9" width="1" height="1" fill="#000"/><text x="1428.7" y="14" text-anchor="middle" font-family="Liberation Sans" font-size="12" fill="#000">25</text><rect x="1442.2" y="9" width="1" height="1" fill="#000"/><rect x="1455.5" y="8" width="1" height="3" fill="#000"/><rect x="1468.7" y="9" width="1" height="1" fill="#000"/><text x="1481.6" y="14" text-anchor="middle" font-family="Liberation Sans" font-size="12" fill="#000">26</text><rect x="1495.1" y="9" width="1" height="1" fill="#000"/><rect x="1508.3" y="8" width="1" height="3" fill="#000"/><rect x="1521.6" y="9" width="1" height="1" fill="#000"/><text x="1534.5" y="14" text-anchor="middle" font-family="Liberation Sans" font-size="12" fill="#000">27</text><rect x="1548.0" y="9" width="1" height="1" fill="#000"/><rect x="1561.2" y="8" width="1" height="3" fill="#000"/><path d="M170 18.5H175M172.5 15V18" stroke="#000" stroke-width="1"/><path d="M236 18.5H241M238.5 15V18" stroke="#000" stroke-width="1"/><path d="M302 18.5H307M304.5 15V18" stroke="#000" stroke-width="1"/><path d="M368 18.5H373M370.5 15V18" stroke="#000" stroke-width="1"/><path d="M435 18.5H440M437.5 15V18" stroke="#000" stroke-width="1"/><path d="M501 18.5H506M503.5 15V18" stroke="#000" stroke-width="1"/><path d="M567 18.5H572M569.5 15V18" stroke="#000" stroke-width="1"/><path d="M633 18.5H638M635.5 15V18" stroke="#000" stroke-width="1"/><path d="M680.5 0V10" stroke="#7a7a7a"/><path d="M675.6 18.2H685.4V14L680.5 9.5L675.6 14Z" fill="#ededed" stroke="#6c6c6c" stroke-width="1.2"/><path d="M101.5 0.7H111.5V3L106.5 9L111.5 15V17.6H101.5V15L106.5 9L101.5 3Z" fill="#ececec" stroke="#6c6c6c" stroke-width="1.2"/><path d="M781 6.5H790M781 8.5H790M781 10.5H790M781 12.5H790" stroke="#8a8a8a" stroke-width="1"/><rect x="892" y="1" width="1" height="17" fill="#000"/><rect x="887" y="4" width="1" height="11" fill="#9a9a9a"/><rect x="684" y="4" width="1" height="11" fill="#9a9a9a"/><rect x="682" y="17" width="210" height="1" fill="#a8a8a8"/><rect x="682" y="1" width="210" height="1" fill="#fafafa"/></svg>
<div class="a" style="left:2px;top:141px;width:26px;height:873px;background:#f0f0f0;"></div>
<div class="a" style="left:2px;top:115px;width:1px;height:916px;background:#fafafa;"></div>
<div class="a" style="left:5px;top:197px;width:18px;height:817px;background:#fff;"></div>
<div class="a" style="left:5px;top:197px;width:18px;height:105px;background:#f0f0f0;border:1px solid #a9a9a9;"></div>
<svg class="a" style="left:5px;top:197px;" width="18" height="817" viewBox="0 0 18 817"><rect x="9" y="13" width="1" height="1" fill="#000"/><rect x="8" y="27" width="3" height="1" fill="#000"/><rect x="9" y="40" width="1" height="1" fill="#000"/><text transform="translate(15.5,52.6) rotate(-90)" text-anchor="middle" y="0" font-family="Liberation Sans" font-size="12">1</text><rect x="9" y="66" width="1" height="1" fill="#000"/><rect x="8" y="80" width="3" height="1" fill="#000"/><rect x="9" y="93" width="1" height="1" fill="#000"/><rect x="9" y="119" width="1" height="1" fill="#000"/><rect x="8" y="132" width="3" height="1" fill="#000"/><rect x="9" y="146" width="1" height="1" fill="#000"/><text transform="translate(15.5,158.4) rotate(-90)" text-anchor="middle" y="0" font-family="Liberation Sans" font-size="12">1</text><rect x="9" y="172" width="1" height="1" fill="#000"/><rect x="8" y="185" width="3" height="1" fill="#000"/><rect x="9" y="199" width="1" height="1" fill="#000"/><text transform="translate(15.5,211.3) rotate(-90)" text-anchor="middle" y="0" font-family="Liberation Sans" font-size="12">2</text><rect x="9" y="225" width="1" height="1" fill="#000"/><rect x="8" y="238" width="3" height="1" fill="#000"/><rect x="9" y="251" width="1" height="1" fill="#000"/><text transform="translate(15.5,264.2) rotate(-90)" text-anchor="middle" y="0" font-family="Liberation Sans" font-size="12">3</text><rect x="9" y="278" width="1" height="1" fill="#000"/><rect x="8" y="291" width="3" height="1" fill="#000"/><rect x="9" y="304" width="1" height="1" fill="#000"/><text transform="translate(15.5,317.1) rotate(-90)" text-anchor="middle" y="0" font-family="Liberation Sans" font-size="12">4</text><rect x="9" y="331" width="1" height="1" fill="#000"/><rect x="8" y="344" width="3" height="1" fill="#000"/><rect x="9" y="357" width="1" height="1" fill="#000"/><text transform="translate(15.5,370.0) rotate(-90)" text-anchor="middle" y="0" font-family="Liberation Sans" font-size="12">5</text><rect x="9" y="384" width="1" height="1" fill="#000"/><rect x="8" y="397" width="3" height="1" fill="#000"/><rect x="9" y="410" width="1" height="1" fill="#000"/><text transform="translate(15.5,422.9) rotate(-90)" text-anchor="middle" y="0" font-family="Liberation Sans" font-size="12">6</text><rect x="9" y="437" width="1" height="1" fill="#000"/><rect x="8" y="450" width="3" height="1" fill="#000"/><rect x="9" y="463" width="1" height="1" fill="#000"/><text transform="translate(15.5,475.8) rotate(-90)" text-anchor="middle" y="0" font-family="Liberation Sans" font-size="12">7</text><rect x="9" y="490" width="1" height="1" fill="#000"/><rect x="8" y="503" width="3" height="1" fill="#000"/><rect x="9" y="516" width="1" height="1" fill="#000"/><text transform="translate(15.5,528.7) rotate(-90)" text-anchor="middle" y="0" font-family="Liberation Sans" font-size="12">8</text><rect x="9" y="542" width="1" height="1" fill="#000"/><rect x="8" y="556" width="3" height="1" fill="#000"/><rect x="9" y="569" width="1" height="1" fill="#000"/><text transform="translate(15.5,581.6) rotate(-90)" text-anchor="middle" y="0" font-family="Liberation Sans" font-size="12">9</text><rect x="9" y="595" width="1" height="1" fill="#000"/><rect x="8" y="609" width="3" height="1" fill="#000"/><rect x="9" y="622" width="1" height="1" fill="#000"/><text transform="translate(15.5,634.5) rotate(-90)" text-anchor="middle" y="0" font-family="Liberation Sans" font-size="12">10</text><rect x="9" y="648" width="1" height="1" fill="#000"/><rect x="8" y="661" width="3" height="1" fill="#000"/><rect x="9" y="675" width="1" height="1" fill="#000"/><text transform="translate(15.5,687.4) rotate(-90)" text-anchor="middle" y="0" font-family="Liberation Sans" font-size="12">11</text><rect x="9" y="701" width="1" height="1" fill="#000"/><rect x="8" y="714" width="3" height="1" fill="#000"/><rect x="9" y="728" width="1" height="1" fill="#000"/><text transform="translate(15.5,740.3) rotate(-90)" text-anchor="middle" y="0" font-family="Liberation Sans" font-size="12">12</text><rect x="9" y="754" width="1" height="1" fill="#000"/><rect x="8" y="767" width="3" height="1" fill="#000"/><rect x="9" y="780" width="1" height="1" fill="#000"/><text transform="translate(15.5,793.2) rotate(-90)" text-anchor="middle" y="0" font-family="Liberation Sans" font-size="12">13</text><rect x="9" y="807" width="1" height="1" fill="#000"/></svg>
<div class="a" style="left:28px;top:141px;width:1828px;height:873px;background:#ababab;"></div>
<div class="a" style="left:28px;top:141px;width:1828px;height:1px;background:#000;"></div>
<div class="a" style="left:28px;top:141px;width:1px;height:873px;background:#000;"></div>
<div class="a" style="left:156px;top:141px;width:1575px;height:33px;background:#000;"></div>
<div class="a" style="left:156px;top:197px;width:1575px;height:817px;background:#000;"></div>
<div class="a" style="left:263px;top:340px;width:1px;height:26px;background:#c8c8c8;"></div>
<div class="a" style="left:263px;top:365px;width:1358px;height:1px;background:#c8c8c8;"></div>
<div class="a" style="left:1621px;top:340px;width:1px;height:26px;background:#c8c8c8;"></div>
<div class="a" style="left:263px;top:392px;width:574px;height:622px;border:1px solid #c8c8c8;border-bottom:none;"></div>
<div class="a" style="left:1048px;top:392px;width:574px;height:622px;border:1px solid #c8c8c8;border-bottom:none;"></div>
<div class="a" style="left:1856px;top:115px;width:18px;height:899px;background:#f0f0f0;"></div>
<svg class="a" style="left:1860px;top:120px;" width="10" height="8" viewBox="0 0 10 8"><path d="M1 6.5L5 2.5L9 6.5" fill="none" stroke="#505050" stroke-width="2"/></svg>
<div class="a" style="left:1857px;top:134px;width:15px;height:16px;background:#cdcdcd;"></div>
<svg class="a" style="left:1860px;top:951px;" width="10" height="8" viewBox="0 0 10 8"><path d="M1 1.5L5 5.5L9 1.5" fill="none" stroke="#505050" stroke-width="2"/></svg>
<div class="a" style="left:1857px;top:964px;width:15px;height:15px;background:#e8e8e8;border:1px solid #c4c4c4;"></div>
<svg class="a" style="left:1860px;top:967px;" width="9" height="9" viewBox="0 0 9 9"><path d="M0.5 4L4.5 0.5L8.5 4Z M0.5 8.5L4.5 5L8.5 8.5Z" fill="#0000d8"/></svg>
<div class="a" style="left:1857px;top:981px;width:15px;height:15px;background:#e8e8e8;border:1px solid #c4c4c4;"></div>
<svg class="a" style="left:1860px;top:984px;" width="9" height="9" viewBox="0 0 9 9"><circle cx="4.5" cy="4.5" r="3.6" fill="#7f9fbd" stroke="#1f344c" stroke-width="1.2"/><circle cx="4" cy="3.8" r="1.5" fill="#b8cde0"/></svg>
<div class="a" style="left:1857px;top:998px;width:15px;height:15px;background:#e8e8e8;border:1px solid #c4c4c4;"></div>
<svg class="a" style="left:1860px;top:1001px;" width="9" height="9" viewBox="0 0 9 9"><path d="M0.5 0.5L4.5 4L8.5 0.5Z M0.5 5L4.5 8.5L8.5 5Z" fill="#0000d8"/></svg>
<div class="a" style="left:2px;top:1014px;width:1872px;height:17px;background:#f0f0f0;"></div>
<div class="a" style="left:0px;top:1031px;width:1875px;height:1px;background:#e2e2e2;"></div>
<div class="a" style="left:18px;top:1015px;width:1821px;height:15px;background:#cdcdcd;"></div>
<svg class="a" style="left:6px;top:1018px;" width="8" height="10" viewBox="0 0 8 10"><path d="M6.5 1.5L3 5L6.5 8.5" fill="none" stroke="#505050" stroke-width="2"/></svg>
<svg class="a" style="left:1844px;top:1018px;" width="8" height="10" viewBox="0 0 8 10"><path d="M1.5 1.5L5 5L1.5 8.5" fill="none" stroke="#505050" stroke-width="2"/></svg>
<div class="a" style="left:1874px;top:113px;width:46px;height:919px;background:#f0f0f0;"></div>
<div class="a" style="left:1874px;top:113px;width:1px;height:918px;background:#fafafa;"></div>
<div class="a" style="left:1875px;top:113px;width:45px;height:1px;background:#a0a0a0;"></div>
<div class="a" style="left:1880px;top:113px;width:1px;height:918px;background:#a0a0a0;"></div>
<div class="a" style="left:1918px;top:113px;width:1px;height:918px;background:#a0a0a0;"></div>
<div class="a" style="left:1875px;top:1031px;width:44px;height:1px;background:#a0a0a0;"></div>
<div class="a" style="left:1919px;top:113px;width:1px;height:918px;background:#fff;"></div>
<svg class="a" style="left:1876px;top:554px;" width="3" height="37" viewBox="0 0 3 37"><path d="M0 0.5L2.5 2.5L0 4.5Z M0 31L2.5 33L0 35Z" fill="#555"/><g fill="#666"><rect x="0" y="9" width="2" height="1"/><rect x="0" y="13" width="2" height="1"/><rect x="0" y="17" width="2" height="1"/><rect x="0" y="21" width="2" height="1"/><rect x="0" y="25" width="2" height="1"/></g></svg>
<svg class="a" style="left:1896px;top:129px;" width="11" height="10" viewBox="0 0 11 10"><path d="M0 0.5H6M0 2.5H6M0 4.5H6" stroke="#1c2333"/><path d="M4 6H10L7 9Z" fill="#1c2333"/></svg>
<div class="a" style="left:1889px;top:152px;width:23px;height:1px;background:#dcdcdc;"></div>
<div class="a" style="left:1884px;top:156px;width:32px;height:31px;background:#f4f4f4;border:1px solid #a8a8a8;border-radius:4px;"></div>
<svg class="a" style="left:1889px;top:159px;" width="21" height="23" viewBox="0 0 21 23"><g stroke="#fff" stroke-width="0.7" stroke-linejoin="round">
<path d="M10 1L14.5 3.2L10 5.4L5.5 3.2Z" fill="#3fb0f0"/><path d="M14.5 3.2L19 5.4L14.5 7.6L10 5.4Z" fill="#a6e04a"/><path d="M5.5 3.2L10 5.4L5.5 7.6L1 5.4Z" fill="#3fb0f0"/><path d="M10 5.4L14.5 7.6L10 9.8L5.5 7.6Z" fill="#a6e04a"/>
<path d="M1 5.4L5.5 7.6V12.6L1 10.4Z" fill="#1e8fe0"/><path d="M5.5 7.6L10 9.8V14.8L5.5 12.6Z" fill="#1e8fe0"/><path d="M1 10.4L5.5 12.6V17.6L1 15.4Z" fill="#1e8fe0"/><path d="M5.5 12.6L10 14.8V19.8L5.5 17.6Z" fill="#7fcf1e"/>
<path d="M10 9.8L14.5 7.6V12.6L10 14.8Z" fill="#8ad426"/><path d="M14.5 7.6L19 5.4V10.4L14.5 12.6Z" fill="#8ad426"/><path d="M10 14.8L14.5 12.6V17.6L10 19.8Z" fill="#8ad426"/><path d="M14.5 12.6L19 10.4V15.4L14.5 17.6Z" fill="#8ad426"/></g>
<ellipse cx="10.5" cy="21.5" rx="7" ry="1.2" fill="#000" opacity="0.12"/></svg>
<svg class="a" style="left:1889px;top:194px;" width="22" height="22" viewBox="0 0 22 22"><path d="M3 8C4 4 8 4 9 6L6 9Z" fill="#d9641c"/><path d="M5 20L9 8L17 13Z" fill="#2a8ad6"/><circle cx="11" cy="12" r="5" fill="#0d2a50"/>
<path d="M12 15C15 14 18 16 16 19C14 20 12 18 13 17Z" fill="#6cbf2a"/><path d="M13 1L14 3.5L16.5 3.5L14.5 5L15.5 7.5L13 6L10.5 7.5L11.5 5L9.5 3.5L12 3.5Z" fill="#b05ee0"/>
<path d="M19 3L19.8 5L22 5L20.3 6.2L21 8.3L19 7L17 8.3L17.7 6.2L16 5L18.2 5Z" fill="#f3c93a"/><path d="M3 9.5L3.8 11.3L5.8 11.3L4.2 12.5L4.8 14.5L3 13.3L1.2 14.5L1.8 12.5L0.2 11.3L2.2 11.3Z" fill="#e8508f"/>
<path d="M19 11L19.8 12.8L21.8 12.8L20.2 14L20.8 16L19 14.8L17.2 16L17.8 14L16.2 12.8L18.2 12.8Z" fill="#e8508f"/>
<ellipse cx="11" cy="21" rx="8" ry="1.2" fill="#000" opacity="0.15"/></svg>
<svg class="a" style="left:1889px;top:229px;" width="22" height="22" viewBox="0 0 22 22"><path d="M1 9L15 3L20 13L6 19Z" fill="#eef3f7" stroke="#9aa9b6" stroke-width="0.8"/><path d="M3.5 9.5L14 5L18 12.5L7 17Z" fill="#5ab0ea"/>
<path d="M5 14L9 9L12 13L15 10L17.5 12.5L7 17Z" fill="#4e9a2a"/><path d="M9 11L11 9L13 11V13H9Z" fill="#fff"/><ellipse cx="11" cy="21" rx="8" ry="1.2" fill="#000" opacity="0.15"/></svg>
<svg class="a" style="left:1889px;top:264px;" width="22" height="22" viewBox="0 0 22 22"><circle cx="11" cy="10.5" r="9.5" fill="#f0a43a"/><circle cx="11" cy="10.5" r="7.2" fill="#f6f8fb"/>
<path d="M15 5L11.8 11.3L10.2 9.7Z" fill="#2d59b8"/><path d="M7 16L10.2 9.7L11.8 11.3Z" fill="#d42020"/><text x="11" y="6.5" text-anchor="middle" font-family="Liberation Sans" font-weight="700" font-size="5" fill="#223">N</text>
<ellipse cx="11" cy="21" rx="8" ry="1.2" fill="#000" opacity="0.15"/></svg>
<div class="a" style="left:1263px;top:300px;width:545px;height:442px;border:1px solid rgba(0,0,0,0.4);"></div>
<div class="a" style="left:1264px;top:301px;width:543px;height:440px;background:#f0f0f0;"></div>
<div class="a" style="left:1264px;top:301px;width:543px;height:25px;background:#fff;"></div>
<div class="t" style="left:1267px;top:307px;font-size:12px;color:#888;letter-spacing:-0.086px;-webkit-text-stroke:0.08px currentColor;-webkit-text-stroke:0px;">Bereich einfügen</div>
<svg class="a" style="left:1787px;top:308px;" width="10" height="10" viewBox="0 0 10 10"><path d="M0 0L10 10M10 0L0 10" stroke="#6a6a6a" stroke-width="1"/></svg>
<div class="a" style="left:1321px;top:334px;width:47px;height:20px;background:#f0f0f0;border:1px solid #d9d9d9;"></div>
<div class="t" style="left:1323px;top:338px;font-size:12px;letter-spacing:-0.271px;">Spalten</div>
<div class="a" style="left:1367px;top:334px;width:50px;height:20px;background:#f0f0f0;border:1px solid #d9d9d9;"></div>
<div class="t" style="left:1371px;top:338px;font-size:12px;letter-spacing:-0.515px;">Einzüge</div>
<div class="a" style="left:1416px;top:334px;width:76px;height:20px;background:#f0f0f0;border:1px solid #d9d9d9;"></div>
<div class="t" style="left:1421px;top:338px;font-size:12px;letter-spacing:0.2px;">Hintergrund</div>
<div class="a" style="left:1491px;top:334px;width:92px;height:20px;background:#f0f0f0;border:1px solid #d9d9d9;"></div>
<div class="t" style="left:1495px;top:338px;font-size:12px;letter-spacing:0.061px;">Fuß-/Endnoten</div>
<div class="a" style="left:1269px;top:353px;width:532px;height:352px;background:#fff;border:1px solid #d9d9d9;"></div>
<div class="a" style="left:1269px;top:331px;width:53px;height:24px;background:#fff;border:1px solid #d9d9d9;border-bottom:none;"></div>
<div class="t" style="left:1272px;top:337px;font-size:12px;font-weight:700;letter-spacing:-0.265px;">Bereich</div>
<div class="t" style="left:1284px;top:364px;font-size:12px;letter-spacing:-0.269px;">Neuer Bereich</div>
<div class="a" style="left:1362px;top:369px;width:80px;height:1px;background:#a0a0a0;"></div>
<div class="a" style="left:1296px;top:382px;width:140px;height:23px;background:#fff;border:1px solid #a9a9a9;"></div>
<div class="t" style="left:1299px;top:388px;font-size:12px;letter-spacing:-0.498px;">Bereich3</div>
<div class="a" style="left:1296px;top:405px;width:140px;height:240px;background:#fff;border:1px solid #828282;"></div>
<div class="t" style="left:1298px;top:408px;font-size:12px;letter-spacing:-0.598px;">Bereich1</div>
<div class="t" style="left:1298px;top:424px;font-size:12px;letter-spacing:-0.484px;">Bereich2</div>
<div class="t" style="left:1454px;top:364px;font-size:12px;letter-spacing:0.159px;">Verknüpfung</div>
<div class="a" style="left:1528px;top:369px;width:258px;height:1px;background:#a0a0a0;"></div>
<div class="a" style="left:1466px;top:382px;width:13px;height:13px;background:#fff;border:1px solid #333333;"></div>
<svg class="a" style="left:1468px;top:384px;" width="9" height="9" viewBox="0 0 9 9"><path d="M0.5 4.5L3.2 7.5L8.5 1" fill="none" stroke="#222" stroke-width="1.2"/></svg>
<div class="t" style="left:1483px;top:383px;font-size:12px;letter-spacing:0.018px;"><u>V</u>erknüpfen</div>
<div class="a" style="left:1466px;top:409px;width:13px;height:13px;background:#fff;border:1px solid #333333;"></div>
<div class="t" style="left:1483px;top:410px;font-size:12px;letter-spacing:-0.6px;"><u>D</u>DE</div>
<div class="t" style="left:1466px;top:441px;font-size:12px;letter-spacing:-0.295px;">Dateina<u>m</u>e</div>
<div class="a" style="left:1596px;top:435px;width:154px;height:23px;background:#fff;border:1px solid #a9a9a9;"></div>
<div class="t" style="left:1600px;top:441px;font-size:12px;width:146px;overflow:hidden;">file:///C:/Users/DIVID/DOWNLOADS</div>
<div class="a" style="left:1600px;top:439px;width:1px;height:15px;background:#000;"></div>
<div class="a" style="left:1757px;top:436px;width:22px;height:21px;background:#e1e1e1;border:1px solid #adadad;"></div>
<div class="t" style="left:1762px;top:441px;font-size:12px;">...</div>
<div class="t" style="left:1466px;top:471px;font-size:12px;letter-spacing:-0.436px;">Berei<u>c</u>h</div>
<div class="a" style="left:1596px;top:465px;width:154px;height:23px;background:#fff;border:1px solid #a9a9a9;"></div>
<div class="a" style="left:1731px;top:467px;width:17px;height:19px;background:#e6e6e6;border:1px solid #c4c4c4;"></div>
<svg class="a" style="left:1735px;top:474px;" width="9" height="5" viewBox="0 0 9 5"><path d="M0.5 0.5L4.5 4.5L8.5 0.5" fill="none" stroke="#3a3a3a" stroke-width="1.2"/></svg>
<div class="t" style="left:1454px;top:500px;font-size:12px;letter-spacing:-0.214px;">Schreibschutz</div>
<div class="a" style="left:1532px;top:506px;width:254px;height:1px;background:#a0a0a0;"></div>
<div class="a" style="left:1466px;top:519px;width:13px;height:13px;background:#fff;border:1px solid #333333;"></div>
<svg class="a" style="left:1468px;top:521px;" width="9" height="9" viewBox="0 0 9 9"><path d="M0.5 4.5L3.2 7.5L8.5 1" fill="none" stroke="#222" stroke-width="1.2"/></svg>
<div class="t" style="left:1483px;top:520px;font-size:12px;letter-spacing:-0.294px;"><u>S</u>chützen</div>
<div class="a" style="left:1485px;top:545px;width:13px;height:13px;background:#fff;border:1px solid #cccccc;"></div>
<div class="t" style="left:1502px;top:546px;font-size:12px;color:#8d8d8d;letter-spacing:0.064px;-webkit-text-stroke:0.08px currentColor;">Mit Kenn<u>w</u>ort</div>
<div class="a" style="left:1757px;top:543px;width:22px;height:21px;background:#cccccc;border:1px solid #c6c6c6;"></div>
<div class="t" style="left:1762px;top:548px;font-size:12px;color:#8d8d8d;-webkit-text-stroke:0.08px currentColor;">...</div>
<div class="t" style="left:1454px;top:576px;font-size:12px;letter-spacing:-0.057px;">Ausblenden</div>
<div class="a" style="left:1522px;top:582px;width:264px;height:1px;background:#a0a0a0;"></div>
<div class="a" style="left:1466px;top:596px;width:13px;height:13px;background:#fff;border:1px solid #333333;"></div>
<div class="t" style="left:1483px;top:597px;font-size:12px;letter-spacing:-0.057px;">Aus<u>b</u>lenden</div>
<div class="t" style="left:1466px;top:628px;font-size:12px;color:#8d8d8d;letter-spacing:0.155px;-webkit-text-stroke:0.08px currentColor;">Mi<u>t</u> Bedingung</div>
<div class="a" style="left:1596px;top:622px;width:184px;height:23px;background:#fff;border:1px solid #a7b6cc;"></div>
<div class="t" style="left:1454px;top:656px;font-size:12px;letter-spacing:-0.173px;">Eigenschaften</div>
<div class="a" style="left:1532px;top:661px;width:254px;height:1px;background:#a0a0a0;"></div>
<div class="a" style="left:1466px;top:675px;width:13px;height:13px;background:#fff;border:1px solid #333333;"></div>
<div class="t" style="left:1483px;top:676px;font-size:12px;letter-spacing:-0.047px;">E<u>d</u>itierbar in schreibgeschütztem Dokument</div>
<div class="a" style="left:1484px;top:712px;width:74px;height:23px;background:#e1e1e1;border:2px solid #0078d7;"></div>
<div class="t" style="left:1497px;top:718px;font-size:12px;letter-spacing:0.014px;">Einfügen</div>
<div class="a" style="left:1565px;top:712px;width:74px;height:23px;background:#e1e1e1;border:1px solid #adadad;"></div>
<div class="t" style="left:1573px;top:718px;font-size:12px;letter-spacing:0.029px;"><u>A</u>bbrechen</div>
<div class="a" style="left:1646px;top:712px;width:74px;height:23px;background:#e1e1e1;border:1px solid #adadad;"></div>
<div class="t" style="left:1670px;top:718px;font-size:12px;letter-spacing:0.167px;"><u>H</u>ilfe</div>
<div class="a" style="left:1727px;top:712px;width:74px;height:23px;background:#e1e1e1;border:1px solid #adadad;"></div>
<div class="t" style="left:1745px;top:718px;font-size:12px;letter-spacing:-0.155px;"><u>Z</u>urück</div>
<svg class="a" style="left:4px;top:1038px;" width="2" height="20" viewBox="0 0 2 20"><rect x="0" y="0" width="2" height="1" fill="#7a7a7a"/><rect x="0" y="1" width="1" height="1" fill="#c8c8c8"/><rect x="0" y="4" width="2" height="1" fill="#7a7a7a"/><rect x="0" y="5" width="1" height="1" fill="#c8c8c8"/><rect x="0" y="8" width="2" height="1" fill="#7a7a7a"/><rect x="0" y="9" width="1" height="1" fill="#c8c8c8"/><rect x="0" y="12" width="2" height="1" fill="#7a7a7a"/><rect x="0" y="13" width="1" height="1" fill="#c8c8c8"/><rect x="0" y="16" width="2" height="1" fill="#7a7a7a"/><rect x="0" y="17" width="1" height="1" fill="#c8c8c8"/></svg>
<svg class="a" style="left:19px;top:1040px;" width="12" height="16" viewBox="0 0 12 16"><path d="M1.5 0.5V12.5L4.5 9.5L7 14.5L9 13.5L6.5 8.5H10.5Z" fill="#fff" stroke="#111" stroke-width="1"/></svg>
<div class="a" style="left:40px;top:1041px;width:1px;height:15px;background:#c8c8c8;"></div>
<svg class="a" style="left:49px;top:1040px;" width="16" height="16" viewBox="0 0 16 16"><path d="M1 14L14 1" stroke="#2d6fc4" stroke-width="1.5"/></svg>
<svg class="a" style="left:74px;top:1042px;" width="16" height="12" viewBox="0 0 16 12"><rect x="0.5" y="0.5" width="15" height="10" fill="#6aa8ee" stroke="#1f4f9a"/><rect x="1.5" y="1.5" width="13" height="3" fill="#a9cdf5"/></svg>
<svg class="a" style="left:99px;top:1042px;" width="16" height="12" viewBox="0 0 16 12"><ellipse cx="8" cy="5.5" rx="7.5" ry="5" fill="#6aa8ee" stroke="#1f4f9a"/></svg>
<svg class="a" style="left:124px;top:1039px;" width="16" height="16" viewBox="0 0 16 16"><path d="M1 11C3 13 4 14 7 13C10 12 12 14 15 13" fill="none" stroke="#2d6fc4" stroke-width="1.3"/><path d="M5 12L12 3L14.5 5L7.5 13.5L4.5 14Z" fill="#f4d03a" stroke="#6b5a1a" stroke-width="0.8"/><path d="M11.5 2.5L13 1L15.5 3.5L14 5Z" fill="#e8718a"/></svg>
<svg class="a" style="left:151px;top:1040px;" width="13" height="15" viewBox="0 0 13 15"><defs><linearGradient id="tg" x1="0" y1="0" x2="0" y2="1"><stop offset="0" stop-color="#4a7fae"/><stop offset="1" stop-color="#1d3f62"/></linearGradient></defs><text x="-0.5" y="14" font-family="Liberation Serif" font-weight="700" font-size="20" fill="url(#tg)">T</text></svg>
<svg class="a" style="left:174px;top:1039px;" width="16" height="16" viewBox="0 0 16 16"><path d="M7.5 0.5C11.5 0.5 14.5 2.8 14.5 6C14.5 9 11.5 11.5 8 11.5L12 15L5.5 11.3C2.5 10.8 0.5 8.6 0.5 6C0.5 2.8 3.5 0.5 7.5 0.5Z" fill="#eef2f6" stroke="#8393a3"/><path d="M4 4H11M4 6.3H11M4 8.6H9" stroke="#2d6fc4" stroke-width="0.9"/></svg>
<div class="a" style="left:198px;top:1041px;width:1px;height:15px;background:#c8c8c8;"></div>
<svg class="a" style="left:206px;top:1039px;" width="16" height="16" viewBox="0 0 16 16"><path d="M7.5 0.5L15 7.5L7.5 14.5L0.5 7.5Z" fill="#6aa8ee" stroke="#1f4f9a"/></svg>
<svg class="a" style="left:230px;top:1045px;" width="5" height="3" viewBox="0 0 5 3"><path d="M0 0H5L2.5 3Z" fill="#000"/></svg>
<svg class="a" style="left:242px;top:1039px;" width="16" height="16" viewBox="0 0 16 16"><circle cx="8" cy="8" r="7.3" fill="#7ab4ef" stroke="#2d64ad"/><circle cx="5.5" cy="6" r="1" fill="#1f4f9a"/><circle cx="10.5" cy="6" r="1" fill="#1f4f9a"/><path d="M4 9.5C6 12 10 12 12 9.5" fill="none" stroke="#1f4f9a"/></svg>
<svg class="a" style="left:266px;top:1045px;" width="5" height="3" viewBox="0 0 5 3"><path d="M0 0H5L2.5 3Z" fill="#000"/></svg>
<svg class="a" style="left:278px;top:1041px;" width="16" height="12" viewBox="0 0 16 12"><path d="M0.5 6L5 1.5V4H11V1.5L15.5 6L11 10.5V8H5V10.5Z" fill="#7ab4ef" stroke="#1f4f9a"/></svg>
<svg class="a" style="left:302px;top:1045px;" width="5" height="3" viewBox="0 0 5 3"><path d="M0 0H5L2.5 3Z" fill="#000"/></svg>
<svg class="a" style="left:315px;top:1039px;" width="16" height="16" viewBox="0 0 16 16"><rect x="0.5" y="0.5" width="14" height="14" fill="#7ab4ef" stroke="#1f4f9a"/><path d="M3.5 1V14M1 3.5H14" stroke="#1f4f9a"/></svg>
<svg class="a" style="left:338px;top:1045px;" width="5" height="3" viewBox="0 0 5 3"><path d="M0 0H5L2.5 3Z" fill="#000"/></svg>
<svg class="a" style="left:350px;top:1039px;" width="16" height="16" viewBox="0 0 16 16"><path d="M2.5 0.5H13.5C14.6 0.5 15.5 1.4 15.5 2.5V8.5C15.5 9.6 14.6 10.5 13.5 10.5H6L1.5 14.5L3 10.5H2.5C1.4 10.5 0.5 9.6 0.5 8.5V2.5C0.5 1.4 1.4 0.5 2.5 0.5Z" fill="#7ab4ef" stroke="#1f4f9a"/></svg>
<svg class="a" style="left:374px;top:1045px;" width="5" height="3" viewBox="0 0 5 3"><path d="M0 0H5L2.5 3Z" fill="#000"/></svg>
<svg class="a" style="left:386px;top:1039px;" width="16" height="16" viewBox="0 0 16 16"><path d="M8 0.5L10 5.8L15.5 5.8L11 9.2L12.8 14.5L8 11.2L3.2 14.5L5 9.2L0.5 5.8L6 5.8Z" fill="#7ab4ef" stroke="#1f4f9a"/></svg>
<svg class="a" style="left:410px;top:1045px;" width="5" height="3" viewBox="0 0 5 3"><path d="M0 0H5L2.5 3Z" fill="#000"/></svg>
<div class="a" style="left:422px;top:1041px;width:1px;height:15px;background:#c8c8c8;"></div>
<svg class="a" style="left:430px;top:1039px;" width="16" height="16" viewBox="0 0 16 16"><g fill="#d4d4d4"><rect x="7" y="0" width="2" height="2"/><rect x="13" y="0" width="2" height="2"/><rect x="1" y="7" width="2" height="2"/><rect x="9" y="7" width="2" height="2"/><rect x="1" y="13" width="2" height="2"/><rect x="13" y="13" width="2" height="2"/></g></svg>
<div class="a" style="left:455px;top:1041px;width:1px;height:15px;background:#c8c8c8;"></div>
<svg class="a" style="left:464px;top:1039px;" width="16" height="16" viewBox="0 0 16 16"><path d="M6 2L8 0.5L10 2" fill="none" stroke="#8a6a40" stroke-width="0.8"/><rect x="0.5" y="2.5" width="15" height="12.5" fill="#f0a43a" stroke="#7a4208"/><rect x="2.5" y="4.5" width="11" height="8.5" fill="#fff"/><text x="8" y="12" text-anchor="middle" font-family="Liberation Sans" font-weight="700" font-size="8" fill="#2c3e5a">A</text></svg>
<svg class="a" style="left:489px;top:1039px;" width="16" height="16" viewBox="0 0 16 16"><circle cx="11" cy="5" r="4.5" fill="#f3c54a" stroke="#b88010" stroke-width="0.8"/><rect x="0.5" y="5.5" width="8" height="8" fill="#ee6a24" stroke="#9a3a08" stroke-width="0.8"/><path d="M6 15L10.5 7.5L15 15Z" fill="#7a9cb8" stroke="#2c4a66" stroke-width="0.8"/></svg>
<div class="a" style="left:513px;top:1041px;width:1px;height:15px;background:#c8c8c8;"></div>
<svg class="a" style="left:521px;top:1039px;" width="17" height="16" viewBox="0 0 17 16"><path d="M1 1H6V6H1Z M6 6L11 9V14L6 11Z M11 9H16V14H11Z" fill="#f2f2f2" stroke="#d6d6d6"/></svg>
<div class="a" style="left:549px;top:1035px;width:10px;height:25px;background:linear-gradient(#f4f4f4,#a9a9a9);"></div>
<svg class="a" style="left:551px;top:1053px;" width="6" height="4" viewBox="0 0 6 4"><path d="M0 0.5H6L3 3.5Z" fill="#000"/></svg>
<div class="a" style="left:560px;top:1031px;width:1px;height:31px;background:#e5e5e5;"></div>
<div class="a" style="left:0px;top:1062px;width:1921px;height:1px;background:#e3e3e3;"></div>
<div class="a" style="left:0px;top:1063px;width:1921px;height:1px;background:#a0a0a0;"></div>
<div class="a" style="left:0px;top:1064px;width:1921px;height:21px;background:#f0f0f0;"></div>
<div class="a" style="left:359px;top:1067px;width:1px;height:17px;background:#a0a0a0;"></div>
<div class="a" style="left:686px;top:1067px;width:1px;height:17px;background:#a0a0a0;"></div>
<div class="a" style="left:1088px;top:1067px;width:1px;height:17px;background:#a0a0a0;"></div>
<div class="a" style="left:1132px;top:1067px;width:1px;height:17px;background:#a0a0a0;"></div>
<div class="a" style="left:1165px;top:1067px;width:1px;height:17px;background:#a0a0a0;"></div>
<div class="a" style="left:1181px;top:1067px;width:1px;height:17px;background:#a0a0a0;"></div>
<div class="a" style="left:1211px;top:1067px;width:1px;height:17px;background:#a0a0a0;"></div>
<div class="a" style="left:1655px;top:1067px;width:1px;height:17px;background:#a0a0a0;"></div>
<div class="a" style="left:1731px;top:1067px;width:1px;height:17px;background:#a0a0a0;"></div>
<div class="a" style="left:1874px;top:1067px;width:1px;height:17px;background:#a0a0a0;"></div>
<div class="t" style="left:10px;top:1070px;font-size:12px;letter-spacing:-0.392px;">Seite 2 / 345</div>
<div class="t" style="left:365px;top:1070px;font-size:12px;letter-spacing:-0.276px;">Standard</div>
<div class="t" style="left:847px;top:1070px;font-size:12px;letter-spacing:-0.389px;">Englisch (USA)</div>
<div class="t" style="left:1092px;top:1070px;font-size:12px;letter-spacing:-0.6px;">EINFG</div>
<div class="t" style="left:1137px;top:1070px;font-size:12px;letter-spacing:-0.8px;">STD</div>
<div class="t" style="left:1168px;top:1070px;font-size:12px;">*</div>
<svg class="a" style="left:1663px;top:1069px;" width="60" height="14" viewBox="0 0 60 14"><path d="M0.5 0.5H6L8.5 3V12.5H0.5Z" fill="#f6f8fa" stroke="#8a97a5"/><path d="M6 0.5V3H8.5" fill="none" stroke="#8a97a5"/>
<path d="M15.5 0.5H21L23.5 3V12.5H15.5Z" fill="#dbe7f5" stroke="#2c5a8f"/><path d="M25.5 0.5H31L33.5 3V12.5H25.5Z" fill="#dbe7f5" stroke="#2c5a8f"/>
<path d="M40.5 0.5H48.5V12.5H40.5Z M48.5 0.5H56.5V12.5H48.5Z" fill="#fff" stroke="#9aa6b2"/></svg>
<svg class="a" style="left:1735px;top:1068px;" width="135" height="16" viewBox="0 0 135 16"><circle cx="7.5" cy="8" r="5.5" fill="#d8e4f0" stroke="#2f4a66" stroke-width="1.3"/><path d="M5 8H10" stroke="#1a2a3a" stroke-width="1.3"/>
<path d="M18 7.5H115" stroke="#7a7a7a" stroke-width="1"/><path d="M18 8.5H115" stroke="#ffffff" stroke-width="1"/><path d="M51.5 2V13" stroke="#777"/><path d="M69.5 2V5" stroke="#777"/><circle cx="69.5" cy="8" r="3.6" fill="#7f9cb8" stroke="#2c4460" stroke-width="1.1"/>
<circle cx="125" cy="8" r="5.5" fill="#d8e4f0" stroke="#2f4a66" stroke-width="1.3"/><path d="M122.5 8H127.5M125 5.5V10.5" stroke="#1a2a3a" stroke-width="1.3"/></svg>
<div class="t" style="left:1879px;top:1070px;font-size:12px;letter-spacing:-0.3px;">140 %</div>
<div class="a" style="left:1920px;top:5px;width:1px;height:1080px;background:#a8a8a8;"></div>
<div class="a" style="left:1920px;top:1080px;width:1px;height:5px;background:#000;"></div>
</body></html>
